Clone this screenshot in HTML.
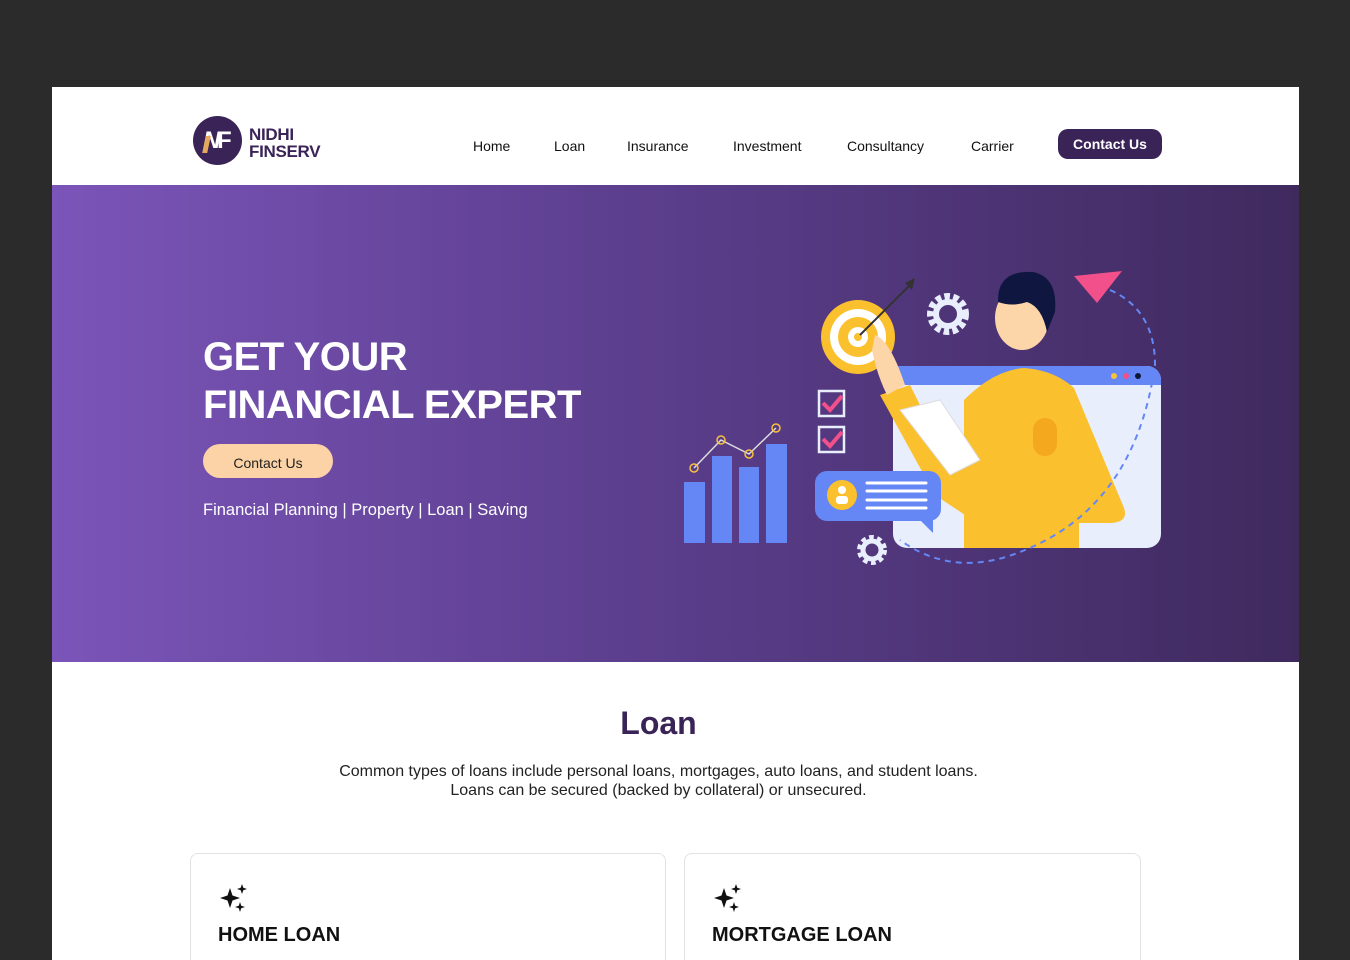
<!DOCTYPE html>
<html><head><meta charset="utf-8"><style>
*{margin:0;padding:0;box-sizing:border-box}
body{width:1350px;height:960px;background:#2b2b2b;font-family:"Liberation Sans",sans-serif;overflow:hidden;position:relative}
.page{position:absolute;left:52px;top:87px;width:1247px;height:873px;background:#fff;overflow:hidden}
.hdr{height:98px;position:relative}
.logo{position:absolute;left:141px;top:29px;width:49px;height:49px;border-radius:50%;background:#3a2457}
.logot{position:absolute;left:197px;top:39px;font-weight:bold;font-size:17px;line-height:17px;color:#3a2457;letter-spacing:-0.3px}
.nav a{position:absolute;top:51px;font-size:14px;color:#111;text-decoration:none}
.cbtn{position:absolute;left:1006px;top:42px;width:104px;height:30px;border-radius:10px;background:#3a2457;color:#fff;font-weight:bold;font-size:14px;text-align:center;line-height:30px}
.hero{position:absolute;left:0;top:98px;width:1247px;height:477px;background:linear-gradient(90deg,#7b55b9 0%,#5d3f8f 45%,#3f2a5e 100%)}
.h1{position:absolute;left:151px;top:148px;color:#fff;font-weight:bold;font-size:40px;line-height:48px;letter-spacing:-0.5px}
.hb{position:absolute;left:151px;top:259px;width:130px;height:34px;border-radius:17px;background:#fcd3a6;color:#222;font-size:14px;text-align:center;line-height:38px}
.tags{position:absolute;left:151px;top:316px;color:#fff;font-size:16.5px}
.sec h2{position:absolute;left:0;width:1213px;top:618px;text-align:center;font-size:32px;color:#3a2457;font-weight:bold}
.sec p{position:absolute;left:0;width:1213px;top:676px;text-align:center;font-size:16px;line-height:18.5px;color:#222}
.card{position:absolute;top:766px;height:140px;border:1px solid #e2e2e2;border-radius:8px}
.card h3{position:absolute;left:27px;top:70px;font-size:20px;color:#111}
</style></head><body>
<div class="page">
 <div class="hdr">
  <div class="logo"><span style="position:absolute;left:10px;top:11px;font-weight:bold;font-size:24px;color:#fff;font-style:italic">N</span><span style="position:absolute;left:24px;top:11px;font-weight:bold;font-size:24px;color:#fff">F</span><span style="position:absolute;left:11px;top:20px;width:5px;height:17px;background:#e6a85c;transform:skewX(-12deg)"></span></div>
  <div class="logot">NIDHI<br>FINSERV</div>
  <div class="nav"><a style="left:421px">Home</a><a style="left:502px">Loan</a><a style="left:575px">Insurance</a><a style="left:681px">Investment</a><a style="left:795px">Consultancy</a><a style="left:919px">Carrier</a></div>
  <div class="cbtn">Contact Us</div>
 </div>
 <div class="hero">
  <div class="h1">GET YOUR<br>FINANCIAL EXPERT</div>
  <div class="hb">Contact Us</div>
  <div class="tags">Financial Planning | Property | Loan | Saving</div>
  <svg style="position:absolute;left:618px;top:75px" width="500" height="320" viewBox="670 260 500 320">
   <rect x="893" y="366" width="268" height="182" rx="14" fill="#e8eefc"/>
   <path d="M893 366h255a14 14 0 0 1 13 13v6H893z" fill="#6587f5"/>
   <circle cx="1114" cy="376" r="3" fill="#f8c23b"/><circle cx="1126" cy="376" r="3" fill="#f2508a"/><circle cx="1138" cy="376" r="3" fill="#0f1636"/>
   <rect x="684" y="482" width="21" height="61" fill="#6587f5"/><rect x="712" y="456" width="20" height="87" fill="#6587f5"/><rect x="739" y="467" width="20" height="76" fill="#6587f5"/><rect x="766" y="444" width="21" height="99" fill="#6587f5"/>
   <polyline points="694,468 721,440 749,454 776,428" fill="none" stroke="#ddd" stroke-width="1.5"/>
   <g fill="none" stroke="#f8c23b" stroke-width="1.5"><circle cx="694" cy="468" r="4"/><circle cx="721" cy="440" r="4"/><circle cx="749" cy="454" r="4"/><circle cx="776" cy="428" r="4"/></g>
   <circle cx="858" cy="337" r="37" fill="#fbc02d"/><circle cx="858" cy="337" r="28" fill="#fff"/><circle cx="858" cy="337" r="20" fill="#fbc02d"/><circle cx="858" cy="337" r="10" fill="#fff"/><circle cx="858" cy="337" r="4" fill="#fbc02d"/>
   <line x1="860" y1="335" x2="910" y2="285" stroke="#333" stroke-width="2"/><path d="M905 283l10-5-3 12z" fill="#333"/>
   <circle cx="948" cy="314" r="16" fill="none" stroke="#e8eefc" stroke-width="10" stroke-dasharray="5 3"/><circle cx="948" cy="314" r="12" fill="none" stroke="#e8eefc" stroke-width="6"/>
   <circle cx="872" cy="550" r="11" fill="none" stroke="#e8eefc" stroke-width="8" stroke-dasharray="4 3"/><circle cx="872" cy="550" r="9" fill="none" stroke="#e8eefc" stroke-width="5"/>
   <rect x="819" y="391" width="25" height="25" fill="none" stroke="#e8eefc" stroke-width="2.5"/><rect x="819" y="427" width="25" height="25" fill="none" stroke="#e8eefc" stroke-width="2.5"/>
   <path d="M823 403l7 7 12-14M823 439l7 7 12-14" fill="none" stroke="#f2508a" stroke-width="4"/>
   <path d="M964 548V400q30-30 60-32q30 2 50 20l50 120q5 15-15 15h-30v25z" fill="#fbc02d"/>
   <path d="M880 395l30-10 40 80 30 0 40-10 5 40-60 20-30-20z" fill="#fbc02d"/>
   <rect x="1033" y="418" width="24" height="38" rx="12" fill="#f3a81e"/>
   <ellipse cx="1022" cy="318" rx="27" ry="32" fill="#fcd5a8"/>
   <path d="M998 300q0-30 35-28q25 5 22 40l-8 20q-5-25-20-30q-15 5-29 0z" fill="#0f1741"/>
   <path d="M900 410l40-10 40 60-30 15z" fill="#fff" stroke="#ddd"/>
   <path d="M875 335q15 5 30 50l-18 10q-10-20-15-45z" fill="#fcd5a8"/>
   <rect x="815" y="471" width="126" height="50" rx="12" fill="#6587f5"/><path d="M915 515l18 18v-18z" fill="#6587f5"/>
   <circle cx="842" cy="495" r="15" fill="#fbc02d"/><circle cx="842" cy="490" r="4" fill="#fff"/><rect x="836" y="496" width="12" height="8" rx="3" fill="#fff"/>
   <g stroke="#fff" stroke-width="3" stroke-linecap="round"><line x1="867" y1="483" x2="926" y2="483"/><line x1="867" y1="491" x2="926" y2="491"/><line x1="867" y1="500" x2="926" y2="500"/><line x1="867" y1="508" x2="926" y2="508"/></g>
   <path d="M1110 290q45 20 45 75q-20 140-130 185q-70 30-125-10" fill="none" stroke="#6587f5" stroke-width="2" stroke-dasharray="6 5"/>
   <path d="M1074 276l48-5-25 32z" fill="#f2508a"/>
  </svg>
 </div>
 <div class="sec"><h2>Loan</h2><p>Common types of loans include personal loans, mortgages, auto loans, and student loans.<br>Loans can be secured (backed by collateral) or unsecured.</p></div>
 <div class="card" style="left:138px;width:476px">
  <svg style="position:absolute;left:27px;top:28px" width="32" height="32" viewBox="0 0 32 32"><path d="M12 6l2.5 7.5L22 16l-7.5 2.5L12 26l-2.5-7.5L2 16l7.5-2.5z M24 2l1.3 3.7L29 7l-3.7 1.3L24 12l-1.3-3.7L19 7l3.7-1.3z M22 20l1.2 3.8L27 25l-3.8 1.2L22 30l-1.2-3.8L17 25l3.8-1.2z" fill="#111"/></svg>
  <h3>HOME LOAN</h3></div>
 <div class="card" style="left:632px;width:457px">
  <svg style="position:absolute;left:27px;top:28px" width="32" height="32" viewBox="0 0 32 32"><path d="M12 6l2.5 7.5L22 16l-7.5 2.5L12 26l-2.5-7.5L2 16l7.5-2.5z M24 2l1.3 3.7L29 7l-3.7 1.3L24 12l-1.3-3.7L19 7l3.7-1.3z M22 20l1.2 3.8L27 25l-3.8 1.2L22 30l-1.2-3.8L17 25l3.8-1.2z" fill="#111"/></svg>
  <h3>MORTGAGE LOAN</h3></div>
</div>
</body></html>
